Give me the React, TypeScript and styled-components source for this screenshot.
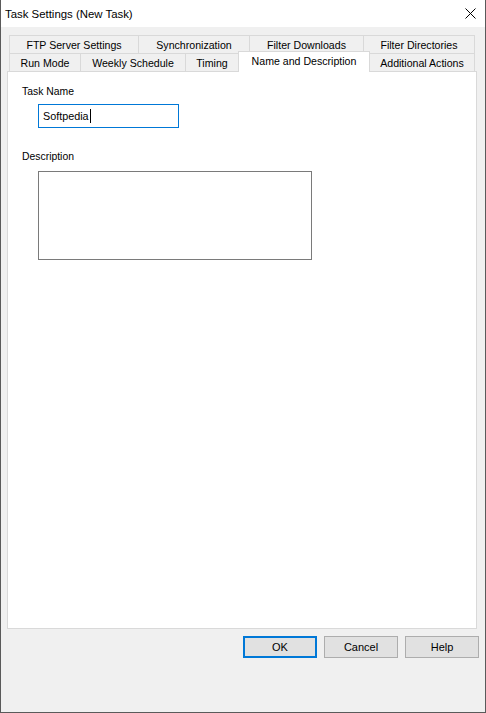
import React from 'react';
import styled, {createGlobalStyle} from 'styled-components';

const GlobalStyle = createGlobalStyle`
  html, body {
    margin: 0;
    padding: 0;
    background: #fff;
  }
  body {
    font-family: "Liberation Sans", Arial, sans-serif;
    color: #000;
  }
`;

const Window = styled.div`
  box-sizing: border-box;
  width: 486px;
  height: 713px;
  display: flex;
  flex-direction: column;
  background: #f0f0f0;
  border: 1px solid #5a5a5a;
  border-top: none;
`;

const TitleBar = styled.div`
  height: 27px;
  flex: none;
  display: flex;
  align-items: center;
  justify-content: space-between;
  background: #fff;
  padding-left: 4px;
  font-size: 11.4px;
`;

const CloseButton = styled.div`
  width: 30px;
  height: 27px;
  display: flex;
  align-items: center;
  justify-content: center;
`;

const Body = styled.div`
  display: flex;
  flex-direction: column;
  padding: 8px 6px 0 6px;
`;

const TabRows = styled.div`
  display: flex;
  flex-direction: column;
  margin-left: 2px;
`;

const TabRow = styled.div`
  display: flex;
  height: 18px;
`;

const Tab = styled.div<{$width: number; $selected?: boolean}>`
  box-sizing: border-box;
  width: ${(p) => p.$width}px;
  height: ${(p) => (p.$selected ? 21 : 18)}px;
  margin-top: ${(p) => (p.$selected ? -2 : 0)}px;
  flex: none;
  display: flex;
  align-items: center;
  justify-content: center;
  border: 1px solid #d9d9d9;
  border-bottom: none;
  background: ${(p) => (p.$selected ? '#fff' : '#f0f0f0')};
  font-size: 10.6px;
  position: relative;
  z-index: ${(p) => (p.$selected ? 1 : 0)};
  padding-bottom: ${(p) => (p.$selected ? 3 : 0)}px;

  & + & {
    margin-left: -1px;
  }
`;

const Panel = styled.div`
  box-sizing: border-box;
  width: 470px;
  height: 558px;
  border: 1px solid #d9d9d9;
  background: #fff;
  padding: 13px 0 0 14px;
`;

const Label = styled.div<{$gap?: number}>`
  font-size: 10.4px;
  line-height: 13px;
  margin-top: ${(p) => p.$gap || 0}px;
`;

const TextInput = styled.div`
  box-sizing: border-box;
  width: 141px;
  height: 24px;
  margin: 6px 0 0 16px;
  border: 1px solid #0078d7;
  background: #fff;
  display: flex;
  align-items: center;
  padding-left: 4px;
  font-size: 10.8px;
`;

const Caret = styled.span`
  display: inline-block;
  width: 1px;
  height: 14px;
  margin-left: 1px;
  background: #000;
`;

const TextArea = styled.div`
  box-sizing: border-box;
  width: 274px;
  height: 89px;
  margin: 8px 0 0 16px;
  border: 1px solid #7a7a7a;
  background: #fff;
`;

const ButtonRow = styled.div`
  display: flex;
  justify-content: flex-end;
  gap: 7px;
  margin-top: 7px;
`;

const Button = styled.div<{$default?: boolean}>`
  box-sizing: border-box;
  width: 74px;
  height: 22px;
  display: flex;
  align-items: center;
  justify-content: center;
  background: #e1e1e1;
  border: ${(p) => (p.$default ? '2px solid #0078d7' : '1px solid #adadad')};
  font-size: 11px;
`;

const topTabs = [
  {label: 'FTP Server Settings', width: 130},
  {label: 'Synchronization', width: 112},
  {label: 'Filter Downloads', width: 115},
  {label: 'Filter Directories', width: 112},
];

const bottomTabs = [
  {label: 'Run Mode', width: 72},
  {label: 'Weekly Schedule', width: 106},
  {label: 'Timing', width: 54},
  {label: 'Name and Description', width: 132, selected: true},
  {label: 'Additional Actions', width: 106},
];

export default function App() {
  return (
    <>
      <GlobalStyle />
      <Window>
        <TitleBar>
          <span>Task Settings (New Task)</span>
          <CloseButton>
            <svg width="11" height="11" viewBox="0 0 11 11">
              <path d="M0.5 0.5 L10.5 10.5 M10.5 0.5 L0.5 10.5" stroke="#000" strokeWidth="1" />
            </svg>
          </CloseButton>
        </TitleBar>
        <Body>
          <TabRows>
            <TabRow>
              {topTabs.map((t) => (
                <Tab key={t.label} $width={t.width}>{t.label}</Tab>
              ))}
            </TabRow>
            <TabRow>
              {bottomTabs.map((t) => (
                <Tab key={t.label} $width={t.width} $selected={t.selected}>{t.label}</Tab>
              ))}
            </TabRow>
          </TabRows>
          <Panel>
            <Label>Task Name</Label>
            <TextInput>
              Softpedia<Caret />
            </TextInput>
            <Label $gap={22}>Description</Label>
            <TextArea />
          </Panel>
          <ButtonRow>
            <Button $default>OK</Button>
            <Button>Cancel</Button>
            <Button>Help</Button>
          </ButtonRow>
        </Body>
      </Window>
    </>
  );
}
